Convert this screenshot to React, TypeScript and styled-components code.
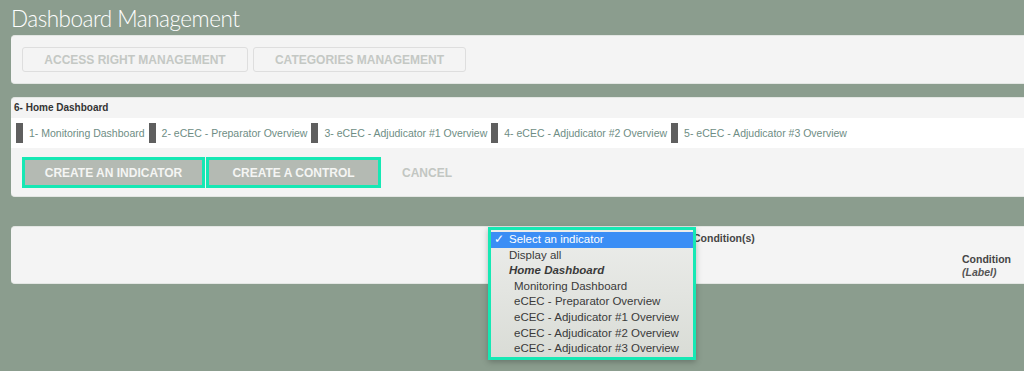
import React from 'react';
import styled, { createGlobalStyle } from 'styled-components';

const GlobalStyle = createGlobalStyle`
  html, body {
    margin: 0;
    padding: 0;
    background: #8b9d8e;
    overflow: hidden;
  }
  body {
    font-family: 'Liberation Sans', Arial, sans-serif;
  }
`;

const Page = styled.div`
  width: 1024px;
  height: 371px;
  padding-left: 11px;
  box-sizing: border-box;
  display: flex;
  flex-direction: column;
`;

const Title = styled.h1`
  margin: 0;
  height: 35px;
  font-family: Lato, 'Liberation Sans', sans-serif;
  font-weight: 300;
  font-size: 22.5px;
  line-height: 38px;
  color: #ffffff;
  letter-spacing: -0.5px;
`;

const Panel = styled.div<{ $mt?: number }>`
  position: relative;
  margin-top: ${({ $mt }) => $mt ?? 0}px;
  background: #f4f4f4;
  border-top: 1px solid #e3e6e3;
  border-bottom: 1px solid #e3e6e3;
  border-radius: 4px 0 0 4px;
`;

const ToolBar = styled.div`
  display: flex;
  gap: 5px;
  padding: 11px 11px 11px;
`;

const GhostButton = styled.button<{ $w: number }>`
  width: ${({ $w }) => $w}px;
  height: 25px;
  background: #f4f4f4;
  border: 1px solid #dedede;
  border-radius: 3px;
  font-family: 'Liberation Sans', Arial, sans-serif;
  font-weight: bold;
  font-size: 12px;
  color: #c4c8c4;
  padding: 0;
`;

const SectionLabel = styled.div`
  height: 20px;
  padding-left: 3px;
  font-size: 10px;
  font-weight: bold;
  color: #333;
  line-height: 20px;
`;

const TabRow = styled.div`
  display: flex;
  align-items: center;
  height: 30px;
  background: #ffffff;
  padding-left: 5px;
`;

const Tab = styled.div`
  display: flex;
  align-items: center;
  margin-right: 4px;
  font-size: 10.5px;
  color: #6e8d84;
  white-space: nowrap;
`;

const TabMark = styled.span`
  display: inline-block;
  width: 7px;
  height: 20px;
  background: #5f5f5f;
  margin-right: 6px;
`;

const ActionRow = styled.div`
  display: flex;
  align-items: center;
  padding: 9px 11px 8px;
`;

const ActionButton = styled.button<{ $w: number }>`
  width: ${({ $w }) => $w}px;
  height: 31px;
  margin-right: 1px;
  background: #b4bab3;
  border: 3px solid #16e8b4;
  box-sizing: border-box;
  font-family: 'Liberation Sans', Arial, sans-serif;
  font-weight: bold;
  font-size: 12px;
  color: #f4f5f3;
  padding: 0;
`;

const TextButton = styled.button`
  margin-left: 20px;
  background: none;
  border: none;
  padding: 0;
  font-family: 'Liberation Sans', Arial, sans-serif;
  font-weight: bold;
  font-size: 12px;
  color: #c2c6c2;
`;

const HeaderGrid = styled.div`
  display: grid;
  grid-template-columns: 682px 269px 1fr;
  grid-template-rows: 26px 31px;
  height: 56px;
  font-size: 10.5px;
  font-weight: bold;
  color: #454545;
`;

const HeadCell = styled.div<{ $col: number; $row: number }>`
  grid-column: ${({ $col }) => $col};
  grid-row: ${({ $row }) => $row};
  padding-top: ${({ $row }) => ($row === 1 ? 5 : 0)}px;
  line-height: 13px;
`;

const Sub = styled.i`
  display: block;
  font-weight: bold;
  color: #555;
`;

const Dropdown = styled.div`
  position: absolute;
  left: 477px;
  top: 0;
  width: 208px;
  height: 133px;
  box-sizing: border-box;
  border: 3px solid #16e8b4;
  background: linear-gradient(#ecedeb, #d9dcd6);
  box-shadow: 0 2px 6px rgba(0, 0, 0, 0.25);
  padding-top: 2px;
  font-family: 'Liberation Sans', Arial, sans-serif;
  font-size: 11.5px;
`;

const Option = styled.div<{ $active?: boolean; $indent?: number; $group?: boolean }>`
  position: relative;
  height: 15.6px;
  line-height: 15.6px;
  padding-left: ${({ $indent }) => $indent ?? 16}px;
  background: ${({ $active }) => ($active ? '#3b8ef5' : 'transparent')};
  color: ${({ $active }) => ($active ? '#ffffff' : '#3a3a3a')};
  font-weight: ${({ $group }) => ($group ? 'bold' : 'normal')};
  font-style: ${({ $group }) => ($group ? 'italic' : 'normal')};
  white-space: nowrap;
`;

const Check = styled.span`
  position: absolute;
  left: 3px;
  top: 0;
`;

const tabs = [
  '1- Monitoring Dashboard',
  '2- eCEC - Preparator Overview',
  '3- eCEC - Adjudicator #1 Overview',
  '4- eCEC - Adjudicator #2 Overview',
  '5- eCEC - Adjudicator #3 Overview',
];

const indicators = [
  'Monitoring Dashboard',
  'eCEC - Preparator Overview',
  'eCEC - Adjudicator #1 Overview',
  'eCEC - Adjudicator #2 Overview',
  'eCEC - Adjudicator #3 Overview',
];

const App: React.FC = () => (
  <>
    <GlobalStyle />
    <Page>
      <Title>Dashboard Management</Title>

      <Panel>
        <ToolBar>
          <GhostButton $w={226}>ACCESS RIGHT MANAGEMENT</GhostButton>
          <GhostButton $w={213}>CATEGORIES MANAGEMENT</GhostButton>
        </ToolBar>
      </Panel>

      <Panel $mt={13}>
        <SectionLabel>6- Home Dashboard</SectionLabel>
        <TabRow>
          {tabs.map((t) => (
            <Tab key={t}>
              <TabMark />
              {t}
            </Tab>
          ))}
        </TabRow>
        <ActionRow>
          <ActionButton $w={183}>CREATE AN INDICATOR</ActionButton>
          <ActionButton $w={175}>CREATE A CONTROL</ActionButton>
          <TextButton>CANCEL</TextButton>
        </ActionRow>
      </Panel>

      <Panel $mt={29}>
        <HeaderGrid>
          <HeadCell $col={2} $row={1}>Condition(s)</HeadCell>
          <HeadCell $col={3} $row={2}>
            Condition
            <Sub>(Label)</Sub>
          </HeadCell>
        </HeaderGrid>

        <Dropdown>
          <Option $active $indent={18}>
            <Check>✓</Check>
            Select an indicator
          </Option>
          <Option $indent={18}>Display all</Option>
          <Option $indent={18} $group>Home Dashboard</Option>
          {indicators.map((i) => (
            <Option key={i} $indent={23}>{i}</Option>
          ))}
        </Dropdown>
      </Panel>
    </Page>
  </>
);

export default App;
